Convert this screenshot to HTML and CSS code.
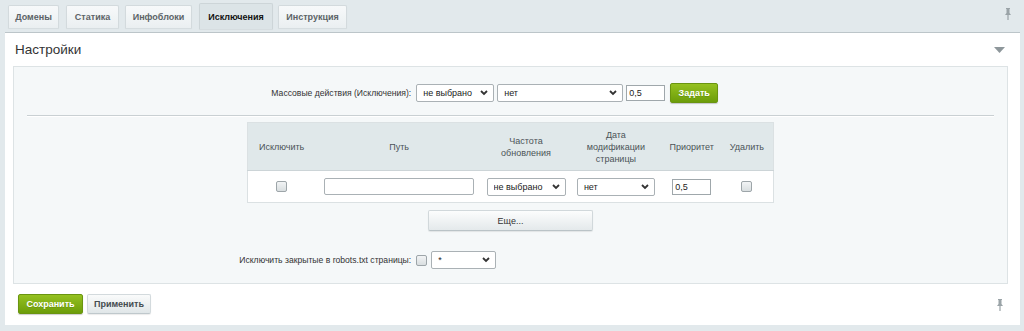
FILE: index.html
```html
<!DOCTYPE html>
<html lang="ru">
<head>
<meta charset="utf-8">
<title>Настройки</title>
<link rel="stylesheet" href="styles.css">
</head>
<body>
<div class="tabbar">
  <div class="tabs">
    <div class="tab t1">Домены</div>
    <div class="tab t2">Статика</div>
    <div class="tab t3">Инфоблоки</div>
    <div class="tab t4 active">Исключения</div>
    <div class="tab t5">Инструкция</div>
  </div>
  <svg class="pin" width="8" height="12" viewBox="0 0 8 12"><path d="M2 0h4v1H5.5v4L7 7H4.6v5H3.4V7H1l1.5-2V1H2z" fill="#9aa3a7"/></svg>
</div>
<div class="panel">
  <div class="panel-head">
    <span class="title">Настройки</span>
    <svg class="collapse" width="11" height="6" viewBox="0 0 11 6"><path d="M0 0h11L5.5 6z" fill="#8e979b"/></svg>
  </div>
  <div class="box">
    <div class="frow mass">
      <div class="flabel">Массовые действия (Исключения):</div>
      <div class="fctrl">
        <span class="sel w78"><select><option>не выбрано</option></select><svg class="chev" width="8" height="6" viewBox="0 0 8 6"><path d="M1 1l3 3 3-3" stroke="#333" stroke-width="1.8" fill="none"/></svg></span>
        <span class="sel w126"><select><option>нет</option></select><svg class="chev" width="8" height="6" viewBox="0 0 8 6"><path d="M1 1l3 3 3-3" stroke="#333" stroke-width="1.8" fill="none"/></svg></span>
        <input class="txt w39" type="text" value="0,5">
        <button class="btn green zad">Задать</button>
      </div>
    </div>
    <div class="sep"></div>
    <table class="grid">
      <thead>
        <tr>
          <th class="c1">Исключить</th>
          <th class="c2">Путь</th>
          <th class="c3">Частота<br>обновления</th>
          <th class="c4">Дата<br>модификации<br>страницы</th>
          <th class="c5">Приоритет</th>
          <th class="c6">Удалить</th>
        </tr>
      </thead>
      <tbody>
        <tr>
          <td><span class="cb"></span></td>
          <td><input class="txt path" type="text"></td>
          <td><span class="sel w79"><select><option>не выбрано</option></select><svg class="chev" width="8" height="6" viewBox="0 0 8 6"><path d="M1 1l3 3 3-3" stroke="#333" stroke-width="1.8" fill="none"/></svg></span></td>
          <td><span class="sel w78"><select><option>нет</option></select><svg class="chev" width="8" height="6" viewBox="0 0 8 6"><path d="M1 1l3 3 3-3" stroke="#333" stroke-width="1.8" fill="none"/></svg></span></td>
          <td><input class="txt w39" type="text" value="0,5"></td>
          <td><span class="cb"></span></td>
        </tr>
      </tbody>
    </table>
    <div class="more-wrap"><button class="btn more">Еще...</button></div>
    <div class="frow robots">
      <div class="flabel">Исключить закрытые в robots.txt страницы:</div>
      <div class="fctrl">
        <span class="cb"></span>
        <span class="sel w65"><select><option>*</option></select><svg class="chev" width="8" height="6" viewBox="0 0 8 6"><path d="M1 1l3 3 3-3" stroke="#333" stroke-width="1.8" fill="none"/></svg></span>
      </div>
    </div>
  </div>
  <div class="footer">
    <div class="actions">
      <button class="btn green save">Сохранить</button>
      <button class="btn grey apply">Применить</button>
    </div>
    <svg class="pin" width="8" height="12" viewBox="0 0 8 12"><path d="M2 0h4v1H5.5v4L7 7H4.6v5H3.4V7H1l1.5-2V1H2z" fill="#9aa3a7"/></svg>
  </div>
</div>
</body>
</html>
```
FILE: styles.css
```css
* { box-sizing: border-box; }
html, body { margin: 0; padding: 0; }
body {
  background: #e2e9ec;
  font-family: "Liberation Sans", Arial, sans-serif;
  font-size: 9px;
  color: #333;
  width: 1024px;
  height: 331px;
  overflow: hidden;
}
.tabbar {
  height: 32px;
  display: flex;
  align-items: flex-start;
  justify-content: space-between;
  padding: 0 12px 0 8px;
}
.tabbar .pin { margin-top: 8px; }
.tabs { display: flex; padding-top: 5px; }
.tab {
  height: 23px;
  line-height: 22px;
  text-align: center;
  font-weight: bold;
  color: #5c6367;
  background: linear-gradient(#f7f9fa, #eaeff1);
  border: 1px solid #d3dadd;
  border-bottom: none;
  border-radius: 2px 2px 0 0;
  box-shadow: 0 1px 1px rgba(0,0,0,.06);
}
.t1 { width: 51px; }
.t2 { width: 53px; margin-left: 7px; }
.t3 { width: 67px; margin-left: 6px; }
.t4 { width: 74px; margin-left: 7px; }
.t5 { width: 69px; margin-left: 5px; }
.tab.active {
  margin-top: -2px;
  height: 26px;
  line-height: 26px;
  color: #111;
  background: #dce4e7;
  border-color: #cdd5d8;
}
.panel {
  margin: 0 4px 0 5px;
  background: #fff;
  border-top: 1px solid #bcc5c9;
  height: 293px;
  display: flex;
  flex-direction: column;
}
.panel-head {
  height: 33px;
  display: flex;
  align-items: center;
  justify-content: space-between;
  padding: 0 15px 0 10px;
}
.title { font-size: 13.5px; color: #333; }
.box {
  margin: 0 12px 0 8px;
  height: 218px;
  background: #f5f8f9;
  border: 1px solid #dde3e5;
  padding-top: 15px;
}
.frow {
  display: grid;
  grid-template-columns: 40% 60%;
  align-items: center;
}
.flabel { text-align: right; color: #333; font-size: 8.6px; }
.fctrl { display: flex; align-items: center; gap: 3px; padding-left: 5px; }
.mass { height: 22px; }
.sel { position: relative; display: inline-block; height: 18px; }
.sel select {
  appearance: none;
  -webkit-appearance: none;
  width: 100%;
  height: 18px;
  border: 1px solid #aab1b5;
  border-radius: 2px;
  background: #fff;
  font-family: "Liberation Sans", Arial, sans-serif;
  font-size: 9px;
  color: #222;
  padding: 0 14px 0 6px;
  margin: 0;
}
.sel .chev { position: absolute; right: 6px; top: 6px; pointer-events: none; }
.w78 { width: 78px; }
.w79 { width: 79px; }
.w126 { width: 126px; }
.w65 { width: 65px; }
.txt {
  height: 16px;
  border: 1px solid #9fa7ab;
  background: #fff;
  font-family: "Liberation Sans", Arial, sans-serif;
  font-size: 9px;
  color: #222;
  padding: 0 2px;
  margin: 0;
}
.w39 { width: 39px; }
.path { width: 150px; height: 17px; border-radius: 2px; border-color: #aab1b5; }
.btn {
  font-family: "Liberation Sans", Arial, sans-serif;
  font-size: 9px;
  font-weight: bold;
  height: 20px;
  border-radius: 2px;
  padding: 0;
  cursor: pointer;
}
.green {
  color: #fff;
  background: linear-gradient(#95c120, #6c9d0a);
  border: 1px solid #6a9510;
  box-shadow: 0 1px 1px rgba(0,0,0,.2);
  text-shadow: 0 1px 0 rgba(0,0,0,.12);
}
.zad { width: 48px; margin-left: 2px; }
.sep {
  margin: 11px 13px 5px 13px;
  height: 2px;
  border-top: 1px solid #c9d0d3;
  border-bottom: 1px solid #fff;
}
.grid {
  margin: 0 auto;
  width: 527px;
  border-collapse: collapse;
  border: 1px solid #dbe1e3;
}
.grid th {
  height: 48px;
  background: #e0e8ea;
  font-weight: normal;
  color: #4b5357;
  line-height: 12px;
  padding: 0;
  border-bottom: 1px solid #ccd4d7;
}
.grid td {
  height: 32px;
  background: #fff;
  text-align: center;
  vertical-align: middle;
  padding: 0;
}
.c1 { width: 68px; }
.c2 { width: 168px; }
.c3 { width: 86px; }
.c4 { width: 94px; }
.c5 { width: 58px; }
.c6 { width: 53px; }
.grid td .sel, .grid td .txt, .grid td .cb { vertical-align: middle; }
.cb {
  display: inline-block;
  width: 11px;
  height: 11px;
  border: 1px solid #9da5a9;
  border-radius: 2px;
  background: linear-gradient(#f2f4f5, #d9dee0);
}
.robots .cb { margin-right: 1px; }
.more-wrap { display: flex; justify-content: center; padding-top: 7px; }
.more {
  width: 165px;
  height: 21px;
  font-weight: normal;
  color: #333;
  background: linear-gradient(#fcfdfd, #e4e9eb);
  border: 1px solid #d1d8db;
  border-bottom-color: #bac3c7;
  box-shadow: 0 1px 1px rgba(0,0,0,.08);
}
.robots { margin-top: 20px; height: 18px; }
.footer {
  display: flex;
  align-items: center;
  justify-content: space-between;
  padding: 10px 16px 0 13px;
}
.actions { display: flex; gap: 4px; }
.save { width: 65px; }
.grey {
  width: 64px;
  color: #454c50;
  background: linear-gradient(#fafbfb, #e0e6e8);
  border: 1px solid #d3dadd;
  border-bottom-color: #bfc8cc;
  box-shadow: 0 1px 1px rgba(0,0,0,.08);
}
.footer .pin { margin-top: 2px; }
```
